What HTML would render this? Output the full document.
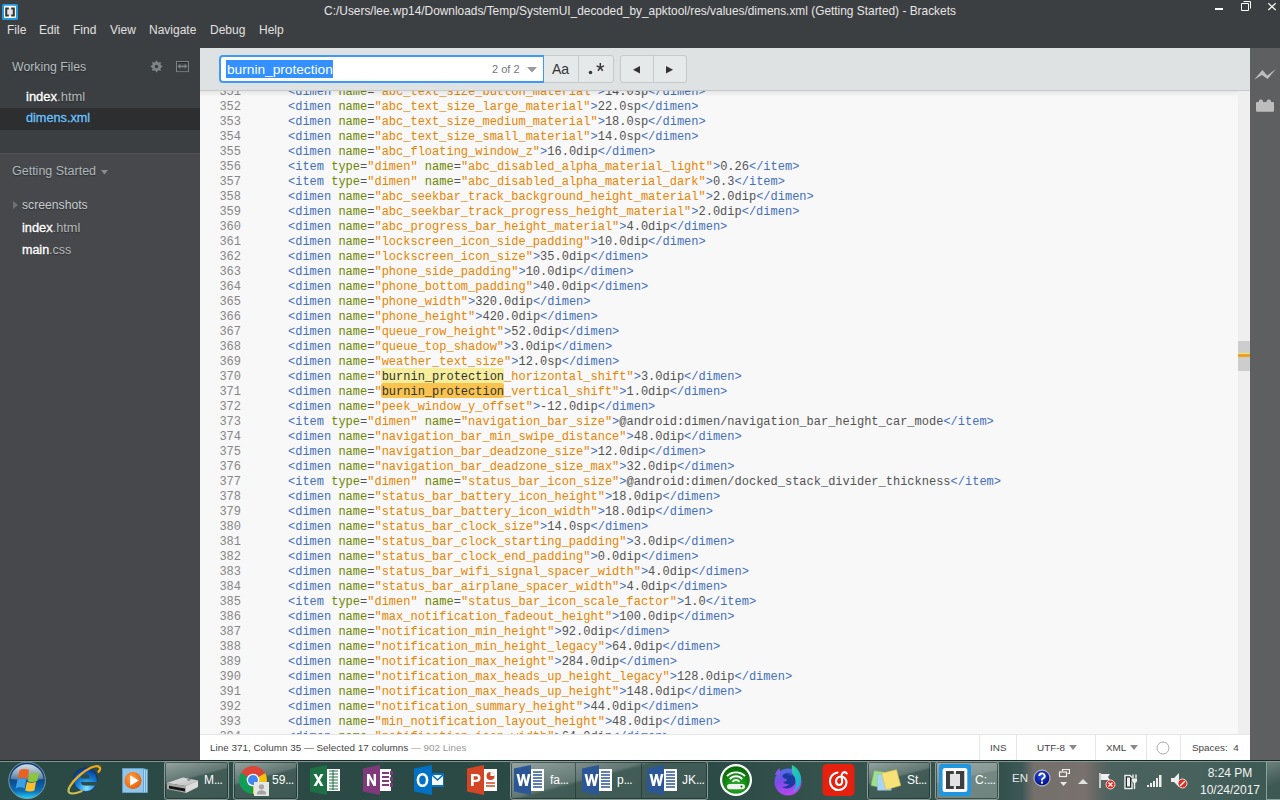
<!DOCTYPE html>
<html><head><meta charset="utf-8">
<style>
*{margin:0;padding:0;box-sizing:border-box}
html,body{width:1280px;height:800px;overflow:hidden;background:#3c3f41;font-family:"Liberation Sans",sans-serif}
.abs{position:absolute}
#title{position:absolute;left:0;top:0;width:1280px;height:48px;background:#3c3f41}
#ttl{position:absolute;left:0;top:4px;width:1280px;text-align:center;color:#e6e6e6;font-size:11.9px;white-space:nowrap}
#menu{position:absolute;left:0;top:23px;color:#e0e0e0;font-size:12px}
#menu span{position:absolute;top:0;white-space:nowrap}
#side{position:absolute;left:0;top:48px;width:200px;height:712px;background:#47484b}
#ws{position:absolute;left:0;top:0;width:200px;height:106px;background:#3c3f41;border-bottom:1px solid #4f5053}
.sb{position:absolute;white-space:nowrap;font-size:12.5px;text-shadow:0 1px 1px rgba(0,0,0,0.35)}
#find{position:absolute;left:200px;top:48px;width:1050px;height:43px;background:#dfe2e2;border-bottom:1px solid #c6c9c9}
#editor{position:absolute;left:200px;top:91px;width:1038px;height:643px;background:#f8f8f8;overflow:hidden}
#code{position:absolute;left:0;top:-6px;font-family:"Liberation Mono",monospace;font-size:12px;color:#535353}
.ln{position:relative;height:15px;line-height:15px;white-space:pre;padding-left:88px}
.ln b{position:absolute;left:0;width:41px;text-align:right;font-weight:normal;color:#868686}
.ln i{font-style:normal}
.t{color:#446fbd}.a{color:#6d8600}.s{color:#e88501}
.h1{color:#333}
.h2{color:#333}
#vscroll{position:absolute;left:1238px;top:91px;width:12px;height:643px;background:#efefef}
#rtb{position:absolute;left:1250px;top:48px;width:30px;height:712px;background:#5e5f61}
#status{position:absolute;left:200px;top:734px;width:1050px;height:26px;background:#fff;border-top:1px solid #e6e6e6;font-size:9.9px;color:#444}
#status .st{position:absolute;top:0;height:25px;border-left:1px solid #e6e6e6}
#status span{position:absolute;white-space:nowrap;top:7px}
#taskbar{position:absolute;left:0;top:760px;width:1280px;height:40px;background:linear-gradient(90deg,#2c4a45 0,#2c4a45 700px,#35524d 830px,#33504b 1000px,#3d5856 1022px,#75706c 1034px,#78716d 1085px,#5d6562 1100px,#4b625e 1112px,#47615c 1200px,#3a5752 1280px)}
.btn{position:absolute;top:55px;height:28px;background:#e6e9e9;border:1px solid #c6c9c9}
.tbb{position:absolute;top:1px;height:39px;border:1px solid #889d98;border-radius:3px;background:linear-gradient(165deg,rgba(255,255,255,0.48) 0%,rgba(255,255,255,0.22) 40%,rgba(255,255,255,0.06) 44%,rgba(255,255,255,0.04) 100%),#36524c;box-shadow:inset 0 0 0 1px rgba(20,35,32,0.55)}
.tbb.act{background:linear-gradient(168deg,rgba(255,255,255,0.50) 0%,rgba(255,255,255,0.40) 40%,rgba(255,255,255,0.30) 44%,rgba(255,255,255,0.28) 100%),#38544e}
.tbt{position:absolute;top:13px;color:#fff;font-size:12px;white-space:nowrap}
</style></head><body>
<div id="title">
 <svg class="abs" style="left:2px;top:4px" width="16" height="16" viewBox="0 0 16 16"><rect x="0" y="0" width="16" height="16" rx="1.5" fill="#1e9be2"/><rect x="2" y="1.8" width="12" height="12.2" rx="1" fill="#fff"/><rect x="5" y="4" width="6" height="8" fill="#e4e4e4"/><path d="M3.2 3.6h3.6v2H5.2v5h1.6v2H3.2zM12.8 3.6H9.2v2h1.6v5H9.2v2h3.6z" fill="#333"/></svg>
 <div id="ttl">C:/Users/lee.wp14/Downloads/Temp/SystemUI_decoded_by_apktool/res/values/dimens.xml (Getting Started) - Brackets</div>
 <svg class="abs" style="left:1210px;top:0" width="70" height="16" viewBox="0 0 70 16"><rect x="5" y="8" width="8" height="2" fill="#fff"/><path d="M31.5 3.5h7v7h-7zM33.5 1.5h7v7" fill="none" stroke="#fff"/><path d="M58.3 3.2l7.4 6.8M65.7 3.2l-7.4 6.8" stroke="#f2f2f2" stroke-width="1.3"/></svg>
 <div id="menu"><span style="left:7px">File</span><span style="left:39px">Edit</span><span style="left:73px">Find</span><span style="left:110px">View</span><span style="left:149px">Navigate</span><span style="left:210px">Debug</span><span style="left:259px">Help</span></div>
</div>
<div id="side">
 <div id="ws">
  <div class="sb" style="left:12px;top:12px;color:#b4bcc0;font-size:12.3px">Working Files</div>
  <svg class="abs" style="left:150px;top:12px" width="13" height="14" viewBox="0 0 13 14"><path d="M6.50 0.30 L8.18 2.43 L10.88 2.12 L10.57 4.82 L12.70 6.50 L10.57 8.18 L10.88 10.88 L8.18 10.57 L6.50 12.70 L4.82 10.57 L2.12 10.88 L2.43 8.18 L0.30 6.50 L2.43 4.82 L2.12 2.12 L4.82 2.43z" fill="#25272a" transform="translate(0 0.8)" opacity="0.6"/><path d="M6.50 0.30 L8.18 2.43 L10.88 2.12 L10.57 4.82 L12.70 6.50 L10.57 8.18 L10.88 10.88 L8.18 10.57 L6.50 12.70 L4.82 10.57 L2.12 10.88 L2.43 8.18 L0.30 6.50 L2.43 4.82 L2.12 2.12 L4.82 2.43z" fill="#7c8386"/><circle cx="6.5" cy="6.5" r="1.7" fill="#3a3c3e"/></svg>
  <svg class="abs" style="left:176px;top:13px" width="14" height="13" viewBox="0 0 14 13"><rect x="0" y="11" width="13" height="1" fill="#26282a"/><rect x="1" y="1" width="11" height="1" fill="#26282a"/><rect x="0.5" y="0.5" width="12" height="10.3" fill="none" stroke="#7c8386"/><path d="M1.5 5.3L4.3 2.8V4.5H8.7V2.8L11.5 5.3 8.7 7.8V6.2H4.3V7.8z" fill="#7c8386"/></svg>
  <div class="sb" style="left:26px;top:41px;color:#fff;font-size:13px"><span style="position:static;-webkit-text-stroke:0.35px #fff">index</span><span style="color:#b5b9bb">.html</span></div>
  <div style="position:absolute;left:0;top:60px;width:200px;height:22px;background:#2d2e30"></div>
  <div class="sb" style="left:26px;top:63px;color:#6cc3ff;font-size:12.7px;-webkit-text-stroke:0.3px #6cc3ff">dimens.xml</div>
 </div>
 <div class="sb" style="left:12px;top:116px;color:#aeb7bb">Getting Started</div>
 <svg class="abs" style="left:101px;top:122px" width="7" height="5"><path d="M0 0h7L3.5 4.5z" fill="#888c8e"/></svg>
 <svg class="abs" style="left:13px;top:153px" width="5" height="8"><path d="M0 0v8l5-4z" fill="#6f7275"/></svg>
 <div class="sb" style="left:22px;top:150px;color:#c6cccf;font-size:12.2px">screenshots</div>
 <div class="sb" style="left:22px;top:172px;color:#fff;font-size:12.8px"><span style="-webkit-text-stroke:0.35px #fff">index</span><span style="color:#b5b9bb">.html</span></div>
 <div class="sb" style="left:22px;top:195px;color:#fff"><span style="-webkit-text-stroke:0.35px #fff">main</span><span style="color:#b5b9bb">.css</span></div>
</div>
<div id="find">
 <div class="abs" style="left:19px;top:7px;width:326px;height:28px;background:#fff;border:2px solid #3d9af7;border-radius:4px 0 0 4px"></div>
 <div class="abs" style="left:26px;top:12px;width:107px;height:18px;background:#3390fe"></div>
 <div class="abs" style="left:27px;top:13px;color:#fff;font-size:13.7px;line-height:18px;white-space:nowrap">burnin_protection</div>
 <div class="abs" style="left:292px;top:15px;color:#777;font-size:11px;white-space:nowrap">2 of 2</div>
 <svg class="abs" style="left:327px;top:19px" width="10" height="6"><path d="M0 0h10L5 5.5z" fill="#999"/></svg>
 <div class="btn" style="left:344px;top:7px;width:35px;border-left:none"></div>
 <div class="btn" style="left:378px;top:7px;width:36px;border-radius:0 3px 3px 0"></div>
 <div class="abs" style="left:352px;top:13px;color:#333;font-size:14px;white-space:nowrap">Aa</div>
 <svg class="abs" style="left:386px;top:13px" width="20" height="14" viewBox="0 0 20 14"><circle cx="4.5" cy="11.5" r="1.8" fill="#3a3a3a"/><g stroke="#3a3a3a" stroke-width="1.5"><path d="M14.3 2v4.5"/><path d="M14.3 6.5l3.7-1.6M14.3 6.5l-3.7-1.6M14.3 6.5l2.4 3.3M14.3 6.5l-2.4 3.3"/></g></svg>
 <div class="btn" style="left:420px;top:7px;width:34px;border-radius:3px 0 0 3px"></div>
 <div class="btn" style="left:453px;top:7px;width:34px;border-radius:0 3px 3px 0"></div>
 <svg class="abs" style="left:433px;top:18px" width="8" height="8"><path d="M7 0v7.5L0 3.75z" fill="#333"/></svg>
 <svg class="abs" style="left:466px;top:18px" width="8" height="8"><path d="M0 0v7.5L7 3.75z" fill="#333"/></svg>
</div>
<div id="editor"><div class="abs" style="left:181px;top:277px;width:123px;height:15px;background:#f6ee9c;border-radius:2px"></div><div class="abs" style="left:181px;top:292px;width:123px;height:15px;background:#f8c34f;border-radius:2px"></div><div id="code">
<div class="ln"><b>351</b><i class="t">&lt;dimen</i> <i class="a">name</i>=<i class="s">"abc_text_size_button_material"</i><i class="t">&gt;</i>14.0sp<i class="t">&lt;/dimen&gt;</i></div>
<div class="ln"><b>352</b><i class="t">&lt;dimen</i> <i class="a">name</i>=<i class="s">"abc_text_size_large_material"</i><i class="t">&gt;</i>22.0sp<i class="t">&lt;/dimen&gt;</i></div>
<div class="ln"><b>353</b><i class="t">&lt;dimen</i> <i class="a">name</i>=<i class="s">"abc_text_size_medium_material"</i><i class="t">&gt;</i>18.0sp<i class="t">&lt;/dimen&gt;</i></div>
<div class="ln"><b>354</b><i class="t">&lt;dimen</i> <i class="a">name</i>=<i class="s">"abc_text_size_small_material"</i><i class="t">&gt;</i>14.0sp<i class="t">&lt;/dimen&gt;</i></div>
<div class="ln"><b>355</b><i class="t">&lt;dimen</i> <i class="a">name</i>=<i class="s">"abc_floating_window_z"</i><i class="t">&gt;</i>16.0dip<i class="t">&lt;/dimen&gt;</i></div>
<div class="ln"><b>356</b><i class="t">&lt;item</i> <i class="a">type</i>=<i class="s">"dimen"</i> <i class="a">name</i>=<i class="s">"abc_disabled_alpha_material_light"</i><i class="t">&gt;</i>0.26<i class="t">&lt;/item&gt;</i></div>
<div class="ln"><b>357</b><i class="t">&lt;item</i> <i class="a">type</i>=<i class="s">"dimen"</i> <i class="a">name</i>=<i class="s">"abc_disabled_alpha_material_dark"</i><i class="t">&gt;</i>0.3<i class="t">&lt;/item&gt;</i></div>
<div class="ln"><b>358</b><i class="t">&lt;dimen</i> <i class="a">name</i>=<i class="s">"abc_seekbar_track_background_height_material"</i><i class="t">&gt;</i>2.0dip<i class="t">&lt;/dimen&gt;</i></div>
<div class="ln"><b>359</b><i class="t">&lt;dimen</i> <i class="a">name</i>=<i class="s">"abc_seekbar_track_progress_height_material"</i><i class="t">&gt;</i>2.0dip<i class="t">&lt;/dimen&gt;</i></div>
<div class="ln"><b>360</b><i class="t">&lt;dimen</i> <i class="a">name</i>=<i class="s">"abc_progress_bar_height_material"</i><i class="t">&gt;</i>4.0dip<i class="t">&lt;/dimen&gt;</i></div>
<div class="ln"><b>361</b><i class="t">&lt;dimen</i> <i class="a">name</i>=<i class="s">"lockscreen_icon_side_padding"</i><i class="t">&gt;</i>10.0dip<i class="t">&lt;/dimen&gt;</i></div>
<div class="ln"><b>362</b><i class="t">&lt;dimen</i> <i class="a">name</i>=<i class="s">"lockscreen_icon_size"</i><i class="t">&gt;</i>35.0dip<i class="t">&lt;/dimen&gt;</i></div>
<div class="ln"><b>363</b><i class="t">&lt;dimen</i> <i class="a">name</i>=<i class="s">"phone_side_padding"</i><i class="t">&gt;</i>10.0dip<i class="t">&lt;/dimen&gt;</i></div>
<div class="ln"><b>364</b><i class="t">&lt;dimen</i> <i class="a">name</i>=<i class="s">"phone_bottom_padding"</i><i class="t">&gt;</i>40.0dip<i class="t">&lt;/dimen&gt;</i></div>
<div class="ln"><b>365</b><i class="t">&lt;dimen</i> <i class="a">name</i>=<i class="s">"phone_width"</i><i class="t">&gt;</i>320.0dip<i class="t">&lt;/dimen&gt;</i></div>
<div class="ln"><b>366</b><i class="t">&lt;dimen</i> <i class="a">name</i>=<i class="s">"phone_height"</i><i class="t">&gt;</i>420.0dip<i class="t">&lt;/dimen&gt;</i></div>
<div class="ln"><b>367</b><i class="t">&lt;dimen</i> <i class="a">name</i>=<i class="s">"queue_row_height"</i><i class="t">&gt;</i>52.0dip<i class="t">&lt;/dimen&gt;</i></div>
<div class="ln"><b>368</b><i class="t">&lt;dimen</i> <i class="a">name</i>=<i class="s">"queue_top_shadow"</i><i class="t">&gt;</i>3.0dip<i class="t">&lt;/dimen&gt;</i></div>
<div class="ln"><b>369</b><i class="t">&lt;dimen</i> <i class="a">name</i>=<i class="s">"weather_text_size"</i><i class="t">&gt;</i>12.0sp<i class="t">&lt;/dimen&gt;</i></div>
<div class="ln"><b>370</b><i class="t">&lt;dimen</i> <i class="a">name</i>=<i class="s">"<i class="h1">burnin_protection</i>_horizontal_shift"</i><i class="t">&gt;</i>3.0dip<i class="t">&lt;/dimen&gt;</i></div>
<div class="ln"><b>371</b><i class="t">&lt;dimen</i> <i class="a">name</i>=<i class="s">"<i class="h2">burnin_protection</i>_vertical_shift"</i><i class="t">&gt;</i>1.0dip<i class="t">&lt;/dimen&gt;</i></div>
<div class="ln"><b>372</b><i class="t">&lt;dimen</i> <i class="a">name</i>=<i class="s">"peek_window_y_offset"</i><i class="t">&gt;</i>-12.0dip<i class="t">&lt;/dimen&gt;</i></div>
<div class="ln"><b>373</b><i class="t">&lt;item</i> <i class="a">type</i>=<i class="s">"dimen"</i> <i class="a">name</i>=<i class="s">"navigation_bar_size"</i><i class="t">&gt;</i>@android:dimen/navigation_bar_height_car_mode<i class="t">&lt;/item&gt;</i></div>
<div class="ln"><b>374</b><i class="t">&lt;dimen</i> <i class="a">name</i>=<i class="s">"navigation_bar_min_swipe_distance"</i><i class="t">&gt;</i>48.0dip<i class="t">&lt;/dimen&gt;</i></div>
<div class="ln"><b>375</b><i class="t">&lt;dimen</i> <i class="a">name</i>=<i class="s">"navigation_bar_deadzone_size"</i><i class="t">&gt;</i>12.0dip<i class="t">&lt;/dimen&gt;</i></div>
<div class="ln"><b>376</b><i class="t">&lt;dimen</i> <i class="a">name</i>=<i class="s">"navigation_bar_deadzone_size_max"</i><i class="t">&gt;</i>32.0dip<i class="t">&lt;/dimen&gt;</i></div>
<div class="ln"><b>377</b><i class="t">&lt;item</i> <i class="a">type</i>=<i class="s">"dimen"</i> <i class="a">name</i>=<i class="s">"status_bar_icon_size"</i><i class="t">&gt;</i>@android:dimen/docked_stack_divider_thickness<i class="t">&lt;/item&gt;</i></div>
<div class="ln"><b>378</b><i class="t">&lt;dimen</i> <i class="a">name</i>=<i class="s">"status_bar_battery_icon_height"</i><i class="t">&gt;</i>18.0dip<i class="t">&lt;/dimen&gt;</i></div>
<div class="ln"><b>379</b><i class="t">&lt;dimen</i> <i class="a">name</i>=<i class="s">"status_bar_battery_icon_width"</i><i class="t">&gt;</i>18.0dip<i class="t">&lt;/dimen&gt;</i></div>
<div class="ln"><b>380</b><i class="t">&lt;dimen</i> <i class="a">name</i>=<i class="s">"status_bar_clock_size"</i><i class="t">&gt;</i>14.0sp<i class="t">&lt;/dimen&gt;</i></div>
<div class="ln"><b>381</b><i class="t">&lt;dimen</i> <i class="a">name</i>=<i class="s">"status_bar_clock_starting_padding"</i><i class="t">&gt;</i>3.0dip<i class="t">&lt;/dimen&gt;</i></div>
<div class="ln"><b>382</b><i class="t">&lt;dimen</i> <i class="a">name</i>=<i class="s">"status_bar_clock_end_padding"</i><i class="t">&gt;</i>0.0dip<i class="t">&lt;/dimen&gt;</i></div>
<div class="ln"><b>383</b><i class="t">&lt;dimen</i> <i class="a">name</i>=<i class="s">"status_bar_wifi_signal_spacer_width"</i><i class="t">&gt;</i>4.0dip<i class="t">&lt;/dimen&gt;</i></div>
<div class="ln"><b>384</b><i class="t">&lt;dimen</i> <i class="a">name</i>=<i class="s">"status_bar_airplane_spacer_width"</i><i class="t">&gt;</i>4.0dip<i class="t">&lt;/dimen&gt;</i></div>
<div class="ln"><b>385</b><i class="t">&lt;item</i> <i class="a">type</i>=<i class="s">"dimen"</i> <i class="a">name</i>=<i class="s">"status_bar_icon_scale_factor"</i><i class="t">&gt;</i>1.0<i class="t">&lt;/item&gt;</i></div>
<div class="ln"><b>386</b><i class="t">&lt;dimen</i> <i class="a">name</i>=<i class="s">"max_notification_fadeout_height"</i><i class="t">&gt;</i>100.0dip<i class="t">&lt;/dimen&gt;</i></div>
<div class="ln"><b>387</b><i class="t">&lt;dimen</i> <i class="a">name</i>=<i class="s">"notification_min_height"</i><i class="t">&gt;</i>92.0dip<i class="t">&lt;/dimen&gt;</i></div>
<div class="ln"><b>388</b><i class="t">&lt;dimen</i> <i class="a">name</i>=<i class="s">"notification_min_height_legacy"</i><i class="t">&gt;</i>64.0dip<i class="t">&lt;/dimen&gt;</i></div>
<div class="ln"><b>389</b><i class="t">&lt;dimen</i> <i class="a">name</i>=<i class="s">"notification_max_height"</i><i class="t">&gt;</i>284.0dip<i class="t">&lt;/dimen&gt;</i></div>
<div class="ln"><b>390</b><i class="t">&lt;dimen</i> <i class="a">name</i>=<i class="s">"notification_max_heads_up_height_legacy"</i><i class="t">&gt;</i>128.0dip<i class="t">&lt;/dimen&gt;</i></div>
<div class="ln"><b>391</b><i class="t">&lt;dimen</i> <i class="a">name</i>=<i class="s">"notification_max_heads_up_height"</i><i class="t">&gt;</i>148.0dip<i class="t">&lt;/dimen&gt;</i></div>
<div class="ln"><b>392</b><i class="t">&lt;dimen</i> <i class="a">name</i>=<i class="s">"notification_summary_height"</i><i class="t">&gt;</i>44.0dip<i class="t">&lt;/dimen&gt;</i></div>
<div class="ln"><b>393</b><i class="t">&lt;dimen</i> <i class="a">name</i>=<i class="s">"min_notification_layout_height"</i><i class="t">&gt;</i>48.0dip<i class="t">&lt;/dimen&gt;</i></div>
<div class="ln"><b>394</b><i class="t">&lt;dimen</i> <i class="a">name</i>=<i class="s">"notification_icon_width"</i><i class="t">&gt;</i>64.0dip<i class="t">&lt;/dimen&gt;</i></div></div><div id="edshadow" class="abs" style="left:0;top:0;width:1038px;height:6px;background:linear-gradient(rgba(0,0,0,0.07),rgba(0,0,0,0))"></div></div>
<div id="vscroll"><div style="position:absolute;left:0;top:250px;width:12px;height:30px;background:#cdcdcd"></div><div style="position:absolute;left:0;top:262px;width:12px;height:1px;background:#f5e27a"></div><div style="position:absolute;left:0;top:263px;width:12px;height:3px;background:#eda21f"></div></div>
<div id="rtb">
 <svg class="abs" style="left:4px;top:21px" width="23" height="12" viewBox="0 0 23 12"><path d="M0.1 10.7L8.4 1.1 13.2 6.4 22 0 13.6 9.9 7.9 5.9z" fill="#bdbdbd"/></svg>
 <svg class="abs" style="left:6px;top:50px" width="19" height="14" viewBox="0 0 19 14"><rect x="0" y="4" width="18" height="9.7" rx="1" fill="#bdbdbd"/><rect x="2.8" y="1.4" width="4.2" height="4" rx="1.8" fill="#bdbdbd"/><rect x="10.6" y="1.4" width="4.4" height="4" rx="1.8" fill="#bdbdbd"/></svg>
</div>
<div id="status">
 <span style="left:10px">Line 371, Column 35 — Selected 17 columns <span style="position:static;color:#999">— 902 Lines</span></span>
 <div class="st" style="left:779px"></div><span style="left:790px">INS</span>
 <div class="st" style="left:816px"></div><span style="left:837px">UTF-8</span>
 <svg class="abs" style="left:869px;top:10px" width="8" height="5"><path d="M0 0h8L4 5z" fill="#8a8a8a"/></svg>
 <div class="st" style="left:895px"></div><span style="left:906px">XML</span>
 <svg class="abs" style="left:930px;top:10px" width="8" height="5"><path d="M0 0h8L4 5z" fill="#8a8a8a"/></svg>
 <div class="st" style="left:946px"></div>
 <svg class="abs" style="left:956px;top:6px" width="14" height="14"><circle cx="7" cy="7" r="6" fill="none" stroke="#aaa"/></svg>
 <div class="st" style="left:980px"></div><span style="left:992px">Spaces:&nbsp; 4</span>
</div>


<div id="taskbar">
 <div class="abs" style="left:0;top:0;width:1280px;height:1px;background:#1c2624"></div>
 <div class="abs" style="left:0;top:1px;width:1280px;height:1px;background:#7f9893"></div>
 
 <!-- start orb -->
 <svg class="abs" style="left:8px;top:1px" width="39" height="39" viewBox="0 0 39 39">
  <defs>
  <linearGradient id="orbg" x1="0" y1="0" x2="0" y2="1"><stop offset="0" stop-color="#0d3f78"/><stop offset="0.5" stop-color="#0a4b8c"/><stop offset="0.8" stop-color="#0f72b8"/><stop offset="1" stop-color="#22d4fa"/></linearGradient>
  <linearGradient id="orbt" x1="0" y1="0" x2="0" y2="1"><stop offset="0" stop-color="#d2dde4"/><stop offset="0.5" stop-color="#9bb0c2"/><stop offset="1" stop-color="#4f7596"/></linearGradient>
  </defs>
  <circle cx="19.1" cy="19.4" r="18.3" fill="url(#orbg)" stroke="#8aa0a8" stroke-width="0.9"/>
  <path d="M2.6 18A16.6 16.6 0 0 1 35.6 18Q19.1 20.5 2.6 18z" fill="url(#orbt)"/>
  <path d="M11.5 9.5Q16 7 21 9L19.5 17.5Q15 15.5 10 17.5z" fill="#ec6020"/>
  <path d="M21.5 11.8Q26 13.5 31 11.5L29.3 20Q25 22 19.8 20.2z" fill="#8cc63f"/>
  <path d="M9.5 18.8Q13.8 16.8 18.2 18.8L16.6 27.2Q12.2 25.2 7.6 27.2z" fill="#3d9fe6"/>
  <path d="M19 20.8Q23.2 22.6 28 20.8L26.4 29.6Q22 31.4 17.2 29.6z" fill="#fbbf2a"/>
 </svg>
 <!-- IE -->
 <svg class="abs" style="left:64px;top:2px" width="40" height="36" viewBox="0 0 40 36">
  <defs><radialGradient id="ie" cx="55%" cy="85%" r="75%"><stop offset="0" stop-color="#8ee6ff"/><stop offset="0.45" stop-color="#1e8fe0"/><stop offset="1" stop-color="#0a3f9a"/></radialGradient>
  <linearGradient id="ring" x1="0" y1="1" x2="1" y2="0"><stop offset="0" stop-color="#b8c46a"/><stop offset="0.3" stop-color="#f4b21c"/><stop offset="1" stop-color="#f2a60f"/></linearGradient></defs>
  <circle cx="21.4" cy="17.8" r="12" fill="url(#ie)" stroke="#0b2f5e" stroke-width="0.8"/>
  <path d="M16.8 16.6A4.5 4.6 0 0 1 25.8 16.6z" fill="#2d4c46"/>
  <path d="M17 20H34.5V23.6H21.5Q17 23.6 17 20z" fill="#2d4c46"/>
  <path d="M17.5 29.2Q8 33 5.2 30.5A19.5 6.2 -40 0 1 35 4.8Q37.5 6.5 34.5 9.8" fill="none" stroke="url(#ring)" stroke-width="2.3" stroke-linecap="round"/>
 </svg>
 <!-- WMP -->
 <svg class="abs" style="left:122px;top:8px" width="27" height="26" viewBox="0 0 27 26"><rect x="4.5" y="1.5" width="21" height="23" fill="#a8d4ef" stroke="#5f9fcf" stroke-width="0.8"/><rect x="2.5" y="1" width="21" height="23.5" fill="#b5dbf3" stroke="#5f9fcf" stroke-width="0.8"/><rect x="0.5" y="0.5" width="21" height="24" fill="#92c6e8" stroke="#5f9fcf" stroke-width="0.8"/><defs><radialGradient id="wmp" cx="40%" cy="35%" r="65%"><stop offset="0" stop-color="#ffa040"/><stop offset="1" stop-color="#e8600a"/></radialGradient></defs><circle cx="11" cy="12.5" r="8.5" fill="url(#wmp)"/><path d="M8.2 7.2v10.6l8.6-5.3z" fill="#fff"/></svg>
 <!-- M... button -->
 <div class="tbb" style="left:164px;width:65px"></div>
 <svg class="abs" style="left:166px;top:16px" width="34" height="19" viewBox="0 0 34 19"><defs><linearGradient id="drv" x1="0" y1="0" x2="1" y2="1"><stop offset="0" stop-color="#e6e6e6"/><stop offset="1" stop-color="#bdbdbd"/></linearGradient></defs><path d="M1 7L17 1.5 32 4.5 20 10z" fill="url(#drv)"/><path d="M1 7L20 10V17L1 13z" fill="#a9a9a9"/><path d="M20 10L32 4.5V11L20 17z" fill="#dcdcdc"/><path d="M3 9.8L19 12.6V15.4L3 12.4z" fill="#151515"/><ellipse cx="23" cy="3.8" rx="2" ry="1" fill="#888"/></svg>
 <div class="tbt" style="left:204px">M<span style="letter-spacing:-0.6px">...</span></div>
 <!-- chrome button -->
 <div class="tbb" style="left:233px;width:65px"></div>
 <svg class="abs" style="left:238px;top:5px" width="31" height="31" viewBox="0 0 31 31">
  <path d="M15 15L2.9 8A14 14 0 0 1 27.1 8z" fill="#db4437"/>
  <path d="M15 15L27.1 8A14 14 0 0 1 15 29z" fill="#f4c20d"/>
  <path d="M15 15L15 29A14 14 0 0 1 2.9 8z" fill="#0f9d58"/>
  <path d="M15 15L27.1 8 15 8z" fill="#db4437"/>
  <circle cx="15" cy="15" r="6.3" fill="#fff"/><circle cx="15" cy="15" r="5" fill="#4285f4"/>
  <rect x="16" y="17" width="15" height="14" fill="#e6e6e6"/><circle cx="23.5" cy="21.8" r="2.6" fill="#a5a5a5"/><path d="M18.8 29.5c0-3 2-4.3 4.7-4.3s4.7 1.3 4.7 4.3z" fill="#a5a5a5"/>
 </svg>
 <div class="tbt" style="left:272px">59<span style="letter-spacing:-0.6px">...</span></div>
 <!-- excel -->
 <svg class="abs" style="left:310px;top:5px" width="31" height="30" viewBox="0 0 31 30"><path d="M0 3.5L17 0v30L0 26.5z" fill="#1d7044"/><rect x="17" y="4" width="13" height="22" fill="#fff"/><path d="M19 6h9M19 9h9M19 12h9M19 15h9M19 18h9M19 21h9M19 24h9M23 5v20" stroke="#1d7044" stroke-width="1"/><path d="M3.5 9h3l2 3.8 2-3.8h3l-3.5 6 3.5 6h-3l-2-3.8-2 3.8h-3l3.5-6z" fill="#fff"/></svg>
 <!-- onenote -->
 <svg class="abs" style="left:363px;top:5px" width="31" height="30" viewBox="0 0 31 30"><path d="M0 3.5L17 0v30L0 26.5z" fill="#80397b"/><rect x="17" y="4" width="11" height="22" fill="#fff"/><path d="M19 8h7M19 12h7M19 16h7M19 20h7" stroke="#80397b" stroke-width="2"/><rect x="27" y="6" width="3" height="4" fill="#80397b"/><rect x="27" y="12" width="3" height="4" fill="#80397b"/><rect x="27" y="18" width="3" height="4" fill="#80397b"/><path d="M4 21V9h2.6l4 7.5V9H13v12h-2.6l-4-7.5V21z" fill="#fff"/></svg>
 <!-- outlook -->
 <svg class="abs" style="left:414px;top:5px" width="31" height="30" viewBox="0 0 31 30"><path d="M0 3.5L18 0v30L0 26.5z" fill="#0072c6"/><rect x="17" y="8" width="13" height="14" fill="#0072c6"/><rect x="18" y="10" width="11" height="10" fill="#fff"/><path d="M18 10l5.5 5 5.5-5" stroke="#0072c6" stroke-width="1.6" fill="none"/><ellipse cx="8.5" cy="15" rx="4.6" ry="5.8" fill="none" stroke="#fff" stroke-width="2.6"/></svg>
 <!-- powerpoint -->
 <svg class="abs" style="left:467px;top:5px" width="31" height="30" viewBox="0 0 31 30"><path d="M0 3.5L17 0v30L0 26.5z" fill="#d24625"/><rect x="17" y="4" width="13" height="22" fill="#fff"/><circle cx="23.5" cy="11" r="4" fill="#d24625"/><path d="M23.5 11V7a4 4 0 0 1 4 4z" fill="#fff"/><path d="M19 18h9M19 21h9" stroke="#d24625" stroke-width="1.5"/><path d="M4 21V9h5c3 0 4.5 1.5 4.5 4s-1.5 4-4.5 4H6.7v4zm2.7-6.3H9c1.3 0 1.9-.6 1.9-1.7S10.3 11.3 9 11.3H6.7z" fill="#fff"/></svg>
 <!-- word group -->
 <div class="tbb" style="left:510px;width:198px"></div>
 <div class="abs" style="left:575px;top:3px;width:1px;height:36px;background:rgba(20,40,36,0.5)"></div>
 <div class="abs" style="left:641px;top:3px;width:1px;height:36px;background:rgba(20,40,36,0.5)"></div>
 <svg class="abs" style="left:514px;top:5px" width="31" height="30" viewBox="0 0 31 30" id="wd"><path d="M0 3.5L17 0v30L0 26.5z" fill="#2b5797"/><rect x="17" y="4" width="13" height="22" fill="#fff"/><path d="M19 7h9M19 10h9M19 13h9M19 16h9M19 19h9M19 22h9" stroke="#2b5797" stroke-width="1.4"/><path d="M2.5 9h2.7l1.5 7.5L8.3 9h2.4l1.6 7.5L13.8 9h2.7l-2.8 12h-2.5L9.5 13.5 7.8 21H5.3z" fill="#fff"/></svg>
 <div class="tbt" style="left:550px">fa<span style="letter-spacing:-0.6px">...</span></div>
 <svg class="abs" style="left:582px;top:5px" width="31" height="30" viewBox="0 0 31 30"><path d="M0 3.5L17 0v30L0 26.5z" fill="#2b5797"/><rect x="17" y="4" width="13" height="22" fill="#fff"/><path d="M19 7h9M19 10h9M19 13h9M19 16h9M19 19h9M19 22h9" stroke="#2b5797" stroke-width="1.4"/><path d="M2.5 9h2.7l1.5 7.5L8.3 9h2.4l1.6 7.5L13.8 9h2.7l-2.8 12h-2.5L9.5 13.5 7.8 21H5.3z" fill="#fff"/></svg>
 <div class="tbt" style="left:617px">p<span style="letter-spacing:-0.6px">...</span></div>
 <svg class="abs" style="left:647px;top:5px" width="31" height="30" viewBox="0 0 31 30"><path d="M0 3.5L17 0v30L0 26.5z" fill="#2b5797"/><rect x="17" y="4" width="13" height="22" fill="#fff"/><path d="M19 7h9M19 10h9M19 13h9M19 16h9M19 19h9M19 22h9" stroke="#2b5797" stroke-width="1.4"/><path d="M2.5 9h2.7l1.5 7.5L8.3 9h2.4l1.6 7.5L13.8 9h2.7l-2.8 12h-2.5L9.5 13.5 7.8 21H5.3z" fill="#fff"/></svg>
 <div class="tbt" style="left:682px">JK<span style="letter-spacing:-0.6px">...</span></div>
 <!-- router -->
 <svg class="abs" style="left:719px;top:3px" width="34" height="34" viewBox="0 0 34 34"><defs><radialGradient id="rt" cx="50%" cy="70%" r="60%"><stop offset="0" stop-color="#2bb52b"/><stop offset="1" stop-color="#0a6e0a"/></radialGradient></defs><circle cx="17" cy="17" r="16" fill="#fff"/><circle cx="17" cy="17" r="13.8" fill="url(#rt)"/><path d="M8 13.2a12.5 12.5 0 0 1 18 0M10.8 16a8.3 8.3 0 0 1 12.4 0M13.6 18.8a4.2 4.2 0 0 1 6.8 0" stroke="#fff" stroke-width="1.9" fill="none"/><rect x="8" y="21" width="18" height="5.2" rx="2.6" fill="#f2f2f2"/><circle cx="22.5" cy="23.6" r="1" fill="#0a6e0a"/></svg>
 <!-- firefox -->
 <svg class="abs" style="left:772px;top:4px" width="33" height="33" viewBox="0 0 33 33"><defs><linearGradient id="ffb" x1="0" y1="0" x2="0.3" y2="1"><stop offset="0" stop-color="#3a7fe0"/><stop offset="0.5" stop-color="#7b4be8"/><stop offset="1" stop-color="#b545f0"/></linearGradient><linearGradient id="fft" x1="0" y1="0" x2="1" y2="1"><stop offset="0" stop-color="#27d39a"/><stop offset="1" stop-color="#1aa6e8"/></linearGradient></defs><circle cx="16" cy="18" r="13.5" fill="url(#ffb)"/><path d="M3 11c1-4 3-6 5-7-1 3 0 5 2 6z" fill="#8a55f0"/><path d="M20 1c6 3 10 9 9 16-0.5 5-4 9-8 11 3-4 4-9 2-13-1-3-4-5-3-14z" fill="url(#fft)"/><path d="M10 12c3-4 9-4 12 0 2 3 2 8-1 10-3 3-8 3-11 1 3 0 6-1 7-3-2 0-5 0-6-2 2 0 4-1 4-3-2 0-4-1-5-3z" fill="#1b3a9e"/><path d="M15 10c2-1 5 0 6 2-2-1-4-1-6-2z" fill="#2a62d8"/></svg>
 <!-- netease -->
 <svg class="abs" style="left:822px;top:4px" width="33" height="33" viewBox="0 0 33 33"><rect x="0.5" y="0" width="32" height="32" rx="4.5" fill="#e6200f"/><path d="M15.5 8.5c-4.5 1-7.5 4.5-7.5 9 0 5 4 8.5 8.5 8.5s8-3.5 8-7.5c0-3.5-2.5-6-5.5-6s-5 2.5-5 5 1.8 3.5 3.5 3.5c2.5 0 3-3 2.5-5.5-0.6-3-1-5.5 1-6.8 1.3-0.8 3-0.3 3.8 0.8" stroke="#fff" stroke-width="2.1" fill="none" stroke-linecap="round"/></svg>
 <!-- sticky -->
 <div class="tbb" style="left:867px;width:64px"></div>
 <svg class="abs" style="left:870px;top:7px" width="36" height="27" viewBox="0 0 34 25.5"><path d="M4 3.5l13 2-3 14.5-13-2.5z" fill="#9ee08a" stroke="#7cc46a" stroke-width="0.5"/><path d="M7 7h13v15H7z" fill="#a9d4f5" stroke="#86b8e0" stroke-width="0.5"/><path d="M11 6l14-3.5 4 15-14 4z" fill="#f7e27a" stroke="#d9bf4a" stroke-width="0.6"/></svg>
 <div class="tbt" style="left:907px">St<span style="letter-spacing:-0.6px">...</span></div>
 <!-- brackets (active) -->
 <div class="tbb act" style="left:935px;width:64px"></div>
 <svg class="abs" style="left:939px;top:4px" width="32" height="32" viewBox="0 0 32 32"><rect x="0" y="0" width="32" height="32" rx="3" fill="#1f96df"/><rect x="3.6" y="4" width="24.7" height="24" rx="2.5" fill="#fff"/><rect x="10" y="8" width="12" height="17" fill="#e2e2e2"/><path d="M7 7h7.8v3h-3.8v12h3.8v3H7zM25.3 7H17v3h4v12h-4v3h8.3z" fill="#3c3e40"/></svg>
 <div class="tbt" style="left:975px">C:<span style="letter-spacing:-0.6px">...</span></div>
 <!-- tray -->
 <div class="tbt" style="left:1012px;top:12px;font-size:11.5px;color:#e8e8e8">EN</div>
 <svg class="abs" style="left:1033px;top:9px" width="18" height="18" viewBox="0 0 18 18"><defs><radialGradient id="hq" cx="45%" cy="35%" r="65%"><stop offset="0" stop-color="#2a4ee8"/><stop offset="1" stop-color="#00087a"/></radialGradient></defs><circle cx="9" cy="9" r="8" fill="url(#hq)" stroke="#a9aeb4" stroke-width="1.3"/><path d="M6.3 7a2.7 2.6 0 1 1 3.8 2.4c-.8.4-1.1.9-1.1 1.7v.5" stroke="#fff" stroke-width="1.9" fill="none"/><rect x="8" y="12.6" width="2" height="2" fill="#fff"/></svg>
 <svg class="abs" style="left:1058px;top:8px" width="12" height="20" viewBox="0 0 12 20"><path d="M4.5 3.5V1.5h7v4h-2" fill="none" stroke="#f0f0f0" stroke-width="1.2"/><rect x="1.5" y="4" width="7" height="4.5" fill="none" stroke="#f0f0f0" stroke-width="1.2"/><path d="M2 14h7l-3.5 4z" fill="#e8e8e8"/></svg>
 <svg class="abs" style="left:1078px;top:19px" width="10" height="5"><path d="M0 5h10L5 0z" fill="#dfe5e5"/></svg>
 <svg class="abs" style="left:1099px;top:13px" width="17" height="17" viewBox="0 0 17 17"><path d="M1 0v15" stroke="#eee" stroke-width="1.5"/><path d="M2 1h9l-2 3 2 3H2z" fill="#eee"/><circle cx="11.5" cy="11.5" r="4.5" fill="#e02a20" stroke="#fff" stroke-width="0.8"/><path d="M9.5 9.5l4 4M13.5 9.5l-4 4" stroke="#fff" stroke-width="1.3"/></svg>
 <svg class="abs" style="left:1123px;top:13px" width="16" height="18" viewBox="0 0 16 18"><path d="M2 2.5h5l2 2v11H2z" fill="#1e2b29" stroke="#f0f0f0" stroke-width="1.4"/><path d="M4 4.5h3v9H4z" fill="#f0f0f0"/><path d="M8.5 5h6v2.5q0 3-3 3t-3-3z" fill="#f0f0f0" stroke="#1e2b29" stroke-width="0.6"/><path d="M10 1.5v3.5M13 1.5v3.5M11.5 10v6" stroke="#f0f0f0" stroke-width="1.4"/></svg>
 <svg class="abs" style="left:1147px;top:14px" width="17" height="13" viewBox="0 0 17 13"><g fill="#eee"><rect x="0" y="11" width="2" height="2"/><rect x="3" y="9" width="2" height="4"/><rect x="6" y="7" width="2" height="6"/><rect x="9" y="4" width="2" height="9"/><rect x="12" y="1" width="2.5" height="12"/></g></svg>
 <svg class="abs" style="left:1171px;top:13px" width="17" height="16" viewBox="0 0 17 16"><path d="M0 5h3l5-5v14L3 9H0z" fill="#eee"/><circle cx="11.5" cy="10.5" r="4.5" fill="#e02a20" stroke="#fff" stroke-width="0.8"/><path d="M9 13l5-5" stroke="#fff" stroke-width="1.5"/></svg>
 <div class="tbt" style="left:1198px;top:5px;font-size:12px;width:64px;text-align:center;line-height:16.5px;color:#f4f4f4">8:24 PM<br>10/24/2017</div>
 <div class="abs" style="left:1266px;top:1px;width:14px;height:39px;border:1px solid #8aa09b;border-right:none;background:linear-gradient(160deg,rgba(255,255,255,0.28),rgba(255,255,255,0.05) 60%),#34504a"></div>
</div>
</body></html>
